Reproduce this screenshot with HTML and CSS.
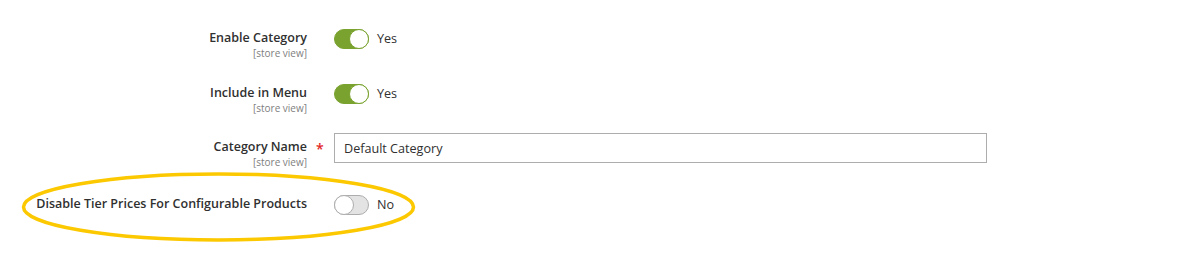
FILE: index.html
```html
<!DOCTYPE html>
<html>
<head>
<meta charset="utf-8">
<link rel="stylesheet" href="styles.css">
</head>
<body>
<div class="page">
  <div class="row row-1">
    <div class="label"><span class="title">Enable Category</span><span class="scope">[store view]</span></div>
    <div class="req"></div>
    <div class="control control-toggle">
      <span class="toggle on"><span class="knob"></span></span><span class="state">Yes</span>
    </div>
  </div>
  <div class="row row-2">
    <div class="label"><span class="title">Include in Menu</span><span class="scope">[store view]</span></div>
    <div class="req"></div>
    <div class="control control-toggle">
      <span class="toggle on"><span class="knob"></span></span><span class="state">Yes</span>
    </div>
  </div>
  <div class="row row-3">
    <div class="label label-input"><span class="title">Category Name</span><span class="scope">[store view]</span></div>
    <div class="req req-input">*</div>
    <div class="control">
      <input class="text-input" type="text" value="Default Category">
    </div>
  </div>
  <div class="row row-4">
    <div class="label"><span class="title">Disable Tier Prices For Configurable Products</span></div>
    <div class="req"></div>
    <div class="control control-toggle">
      <span class="toggle off"><span class="knob"></span></span><span class="state">No</span>
    </div>
    <svg class="highlight" width="400" height="74" viewBox="0 0 400 74">
      <ellipse cx="197.5" cy="36" rx="195" ry="33" fill="none" stroke="#fcc800" stroke-width="3.5"/>
    </svg>
  </div>
</div>
</body>
</html>
```

FILE: styles.css
```css
html, body {
  margin: 0;
  padding: 0;
  background: #ffffff;
}
body {
  font-family: "Open Sans", "Liberation Sans", sans-serif;
  color: #303030;
  width: 1192px;
  height: 253px;
  overflow: hidden;
}
.page {
  padding-top: 29px;
}
.row {
  display: grid;
  grid-template-columns: 307px 27px 653px;
  align-items: start;
  position: relative;
}
.row-1 { margin-bottom: 25px; }
.row-2 { margin-bottom: 19px; }
.row-3 { margin-bottom: 27px; }
.label {
  display: flex;
  flex-direction: column;
  align-items: flex-end;
  text-align: right;
}
.label-input { padding-top: 5px; }
.title {
  font-size: 12.5px;
  font-weight: 600;
  line-height: 18px;
  color: #303030;
}
.scope {
  font-size: 10px;
  line-height: 12px;
  color: #808080;
}
.req-input {
  color: #e22626;
  font-size: 14px;
  font-weight: 600;
  line-height: 18px;
  padding-top: 7px;
  padding-left: 9px;
}
.control {
  display: flex;
  align-items: center;
}
.control-toggle {
  height: 20px;
}
.toggle {
  box-sizing: border-box;
  width: 35px;
  height: 20px;
  border-radius: 10px;
  border: 1px solid #adadad;
  background: #e3e3e3;
  position: relative;
  display: inline-block;
}
.toggle.on {
  background: #79a22e;
  border-color: #79a22e;
}
.knob {
  box-sizing: border-box;
  position: absolute;
  top: -1px;
  left: -1px;
  width: 20px;
  height: 20px;
  border-radius: 50%;
  background: #ffffff;
  border: 1px solid #adadad;
}
.toggle.on .knob {
  left: auto;
  right: -1px;
  border-color: #79a22e;
}
.state {
  margin-left: 8px;
  font-size: 12.6px;
  line-height: 18px;
  color: #303030;
}
.text-input {
  box-sizing: border-box;
  width: 653px;
  height: 30px;
  border: 1px solid #adadad;
  padding: 0 9px;
  font-family: "Open Sans", "Liberation Sans", sans-serif;
  font-size: 12.6px;
  color: #303030;
  outline: none;
  margin: 0;
}
.highlight {
  position: absolute;
  left: 21px;
  top: -24px;
}
```
